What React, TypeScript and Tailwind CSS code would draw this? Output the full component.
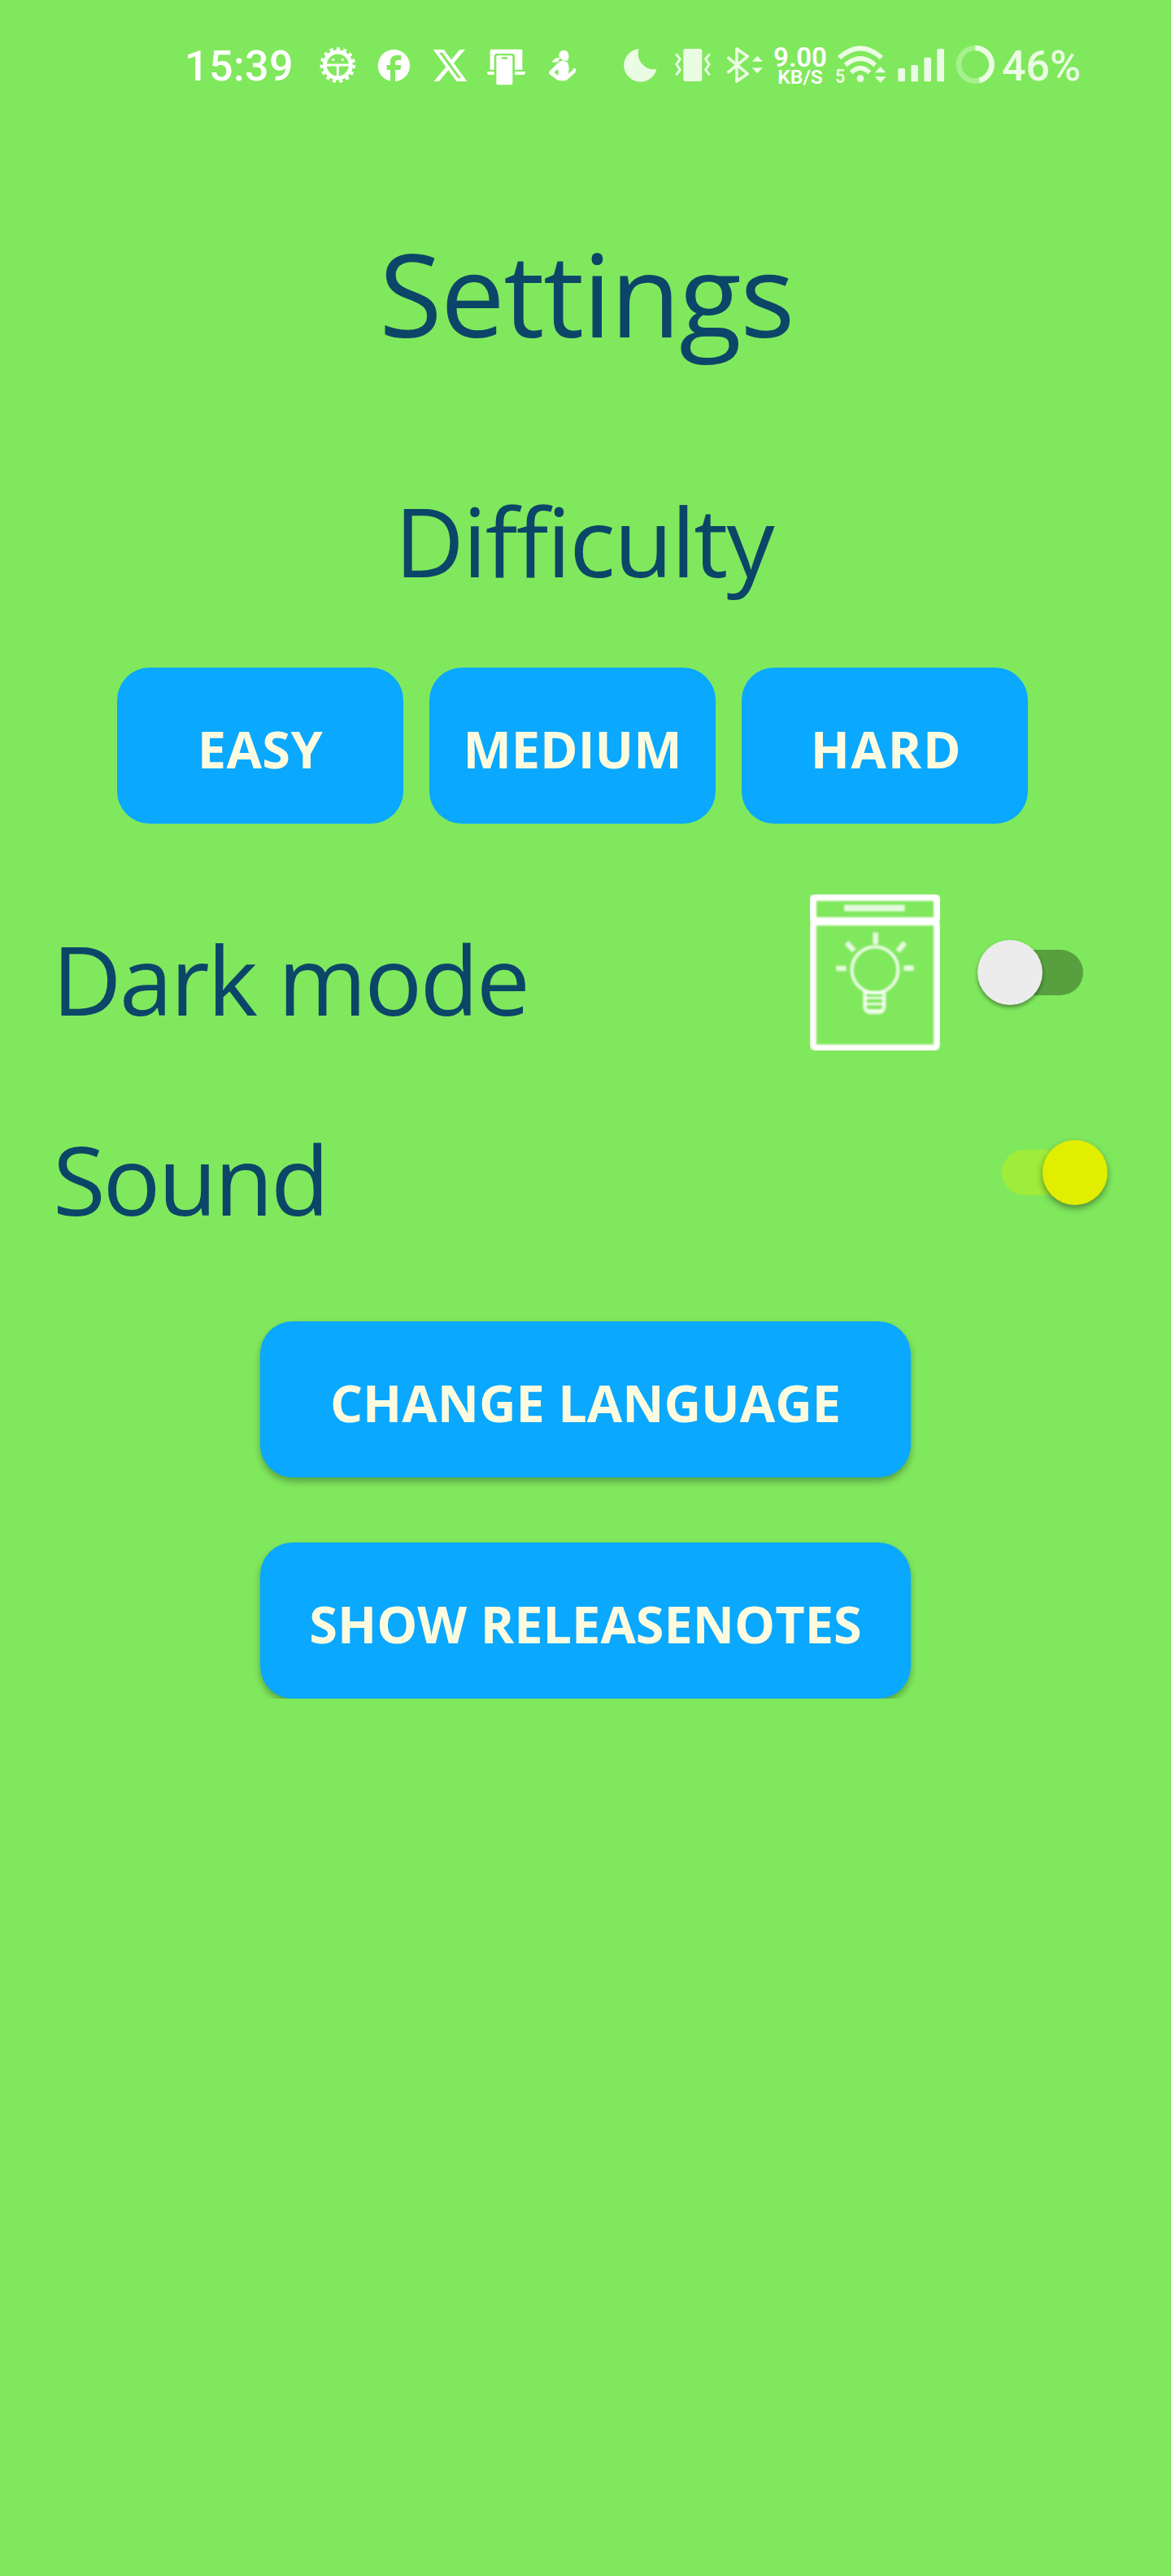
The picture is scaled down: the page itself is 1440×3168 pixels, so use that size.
const BG = "#80e85d";
const SOFT = "#eafce3";

function StatusBar() {
  return (
    <header className="flex h-[160px] items-start pt-10 pl-[210px] font-[Roboto] leading-none text-white">
      <div className="h-20 w-[180px] pt-4 pl-[17px] text-[52px] font-medium tracking-[0.4px] whitespace-nowrap">15:39</div>
      <svg className="h-20 w-[60px]" viewBox="540 0 180 240">
        <circle cx="616" cy="120" r="60" fill="none" stroke="#fff" strokeWidth="11" strokeDasharray="12.5 12.63" />
        <circle cx="616" cy="120" r="48" fill="none" stroke="#fff" strokeWidth="15" />
        <path d="M577 113A40 40 0 0 1 655 113Z" fill={BG} />
        <path d="M572 120H660M616 120V164" stroke="#fff" strokeWidth="9" />
        <circle cx="599" cy="100" r="5" fill="#fff" />
        <circle cx="634" cy="100" r="5" fill="#fff" />
      </svg>
      <svg className="h-20 w-[70px]" viewBox="0 0 210 240">
        <circle cx="103" cy="122" r="59" fill="#fff" />
        <path d="M90 183V138H77V120H90V108Q90 84 114 84H130V101H119Q108 101 108 111V120H130L127 138H108V183Z" fill={BG} />
      </svg>
      <svg className="h-20 w-[75px]" viewBox="210 0 225 240">
        <path
          transform="translate(240.8 49.5) scale(5.79 6)"
          fill="#fff"
          d="M18.244 2.25h3.308l-7.227 8.26 8.502 11.24H16.17l-5.214-6.817L4.99 21.75H1.68l7.73-8.835L1.254 2.25H8.08l4.713 6.231zm-1.161 17.52h1.833L7.084 4.126H5.117z"
        />
      </svg>
      <svg className="h-20 w-[70px]" viewBox="435 0 210 240">
        <path d="M462 62H573Q577 62 577 66V137H549V88Q549 78 539 78H483Q473 78 473 88V137H458V66Q458 62 462 62Z" fill="#fff" />
        <path d="M447 144H473V156H453Q447 154 447 144ZM549 144H588Q588 154 582 156H549Z" fill="#fff" />
        <rect x="481" y="85" width="60" height="108" rx="5" fill="#fff" />
        <rect x="499" y="91" width="24" height="7" rx="3.5" fill={BG} />
      </svg>
      <svg className="h-20 w-[75px]" viewBox="645 0 225 240">
        <circle cx="730" cy="83" r="18" fill="#fff" />
        <path d="M734 84L749 88L745 104H724Z" fill="#fff" />
        <path d="M714 93Q700 91 694 100Q690 106 684 107Q692 113 704 109Q714 105 714 93Z" fill="#fff" />
        <path
          fillRule="evenodd"
          fill="#fff"
          d="M712 108Q728 100 745 112Q752 130 746 152L764 138L763 134Q770 130 774 134L773 147L740 176Q722 180 706 175L677 154Q672 148 678 142ZM708 134L694 147L709 159Q712 148 708 134Z"
        />
      </svg>
      <svg className="h-20 w-20" viewBox="0 0 240 240">
        <path d="M137 60A61 61 0 1 0 202 135A58 58 0 0 1 137 60Z" fill={SOFT} />
      </svg>
      <svg className="h-20 w-[68px]" viewBox="240 0 204 240">
        <rect x="301" y="60" width="69" height="120" rx="8" fill={SOFT} />
        <path d="M274 79L289 98L276 117L289 138L274 157M398 79L383 98L396 117L383 138L398 157" fill="none" stroke={SOFT} strokeWidth="9" />
      </svg>
      <svg className="h-20 w-[60px]" viewBox="444 0 180 240">
        <path d="M464 91L538 152L498 180V60L538 88L464 149" fill="none" stroke={SOFT} strokeWidth="11" strokeLinejoin="round" />
        <path d="M554 107L574 86L594 107ZM554 130H594L574 151Z" fill={SOFT} />
      </svg>
      <div className="flex h-20 w-[76px] flex-col items-center pt-[17px] pr-[4px] font-semibold whitespace-nowrap">
        <span className="text-[33px] leading-[28px]">9.00</span>
        <span className="text-[24.5px] leading-[20px]">KB/S</span>
      </div>
      <svg className="h-20 w-[72px]" viewBox="42 0 216 240">
        <path d="M66 93Q144 23 222 93" fill="none" stroke={SOFT} strokeWidth="18" />
        <path d="M89 120Q144 72 199 120" fill="none" stroke={SOFT} strokeWidth="17" />
        <path d="M110 148Q144 115 178 148" fill="none" stroke={SOFT} strokeWidth="17" />
        <circle cx="144" cy="170" r="13" fill={SOFT} />
        <path d="M197 148L218 127L239 148ZM197 163H239L218 185Z" fill={SOFT} />
        <text x="51" y="186" fontSize="71" fontWeight="600" textLength="37" lengthAdjust="spacingAndGlyphs" fill={SOFT}>5</text>
      </svg>
      <svg className="h-20 w-[74px]" viewBox="258 0 222 240">
        <rect x="283" y="132" width="26" height="49" rx="5" fill={SOFT} />
        <rect x="331" y="120" width="26" height="61" rx="5" fill={SOFT} />
        <rect x="379" y="92" width="26" height="89" rx="5" fill={SOFT} />
        <rect x="427" y="60" width="26" height="121" rx="5" fill={SOFT} />
      </svg>
      <svg className="h-20 w-[59px]" viewBox="480 0 177 240">
        <circle cx="568" cy="118" r="61" fill="none" stroke="#a6f08d" strokeWidth="20" />
        <path d="M568 57A61 61 0 0 1 583 177" fill="none" stroke={SOFT} strokeWidth="20" />
      </svg>
      <div className="h-20 pt-4 pl-[3px] text-[52px] font-medium whitespace-nowrap text-[#eafce3]">46%</div>
    </header>
  );
}

function BulbIcon() {
  return (
    <svg className="h-48 w-40 overflow-hidden" viewBox="0 0 480 576">
      <defs>
        <filter id="soft" x="-10%" y="-10%" width="120%" height="120%">
          <feGaussianBlur stdDeviation="3" />
        </filter>
      </defs>
      <g fill="none" stroke="#fff" filter="url(#soft)">
        <rect x="10" y="10" width="460" height="88" rx="14" strokeWidth="28" />
        <rect x="11" y="102" width="458" height="464" rx="14" strokeWidth="25" />
        <g strokeOpacity="0.8">
          <path d="M126 50H350" strokeWidth="24" />
          <circle cx="240" cy="278" r="85" strokeWidth="13" />
          <path d="M242 140V184M135 178L163 208M350 178L324 210M97 273H134M346 272H383" strokeWidth="20" />
          <path d="M203 358V415Q205 434 222 434H254Q271 434 273 415V358" strokeWidth="15" />
          <path d="M202 362H274M202 382H274M202 404H274M210 428H266" strokeWidth="10" />
        </g>
      </g>
    </svg>
  );
}

function Switch({ on }: { on: boolean }) {
  return (
    <div
      role="switch"
      aria-checked={on}
      className={
        on
          ? "flex h-14 w-[100px] items-center justify-end rounded-full bg-[#9fec3a]"
          : "flex h-14 w-[100px] items-center rounded-full bg-[#58a03f]"
      }
    >
      <span
        className={
          on
            ? "-mr-[30px] size-20 shrink-0 rounded-full bg-[#e2ee00] shadow-[0_4px_8px_rgba(0,0,0,0.4)]"
            : "-ml-[30px] size-20 shrink-0 rounded-full bg-[#ececec] shadow-[0_3px_5px_rgba(0,0,0,0.4)]"
        }
      />
    </div>
  );
}

function Level({ label, className = "" }: { label: string; className?: string }) {
  return (
    <button
      className={`flex h-48 w-[352px] items-center justify-center rounded-[40px] bg-[#0aa8ff] pt-[7px] text-[63px] leading-none font-bold text-[#fdfbdf] ${className}`}
    >
      {label}
    </button>
  );
}

function Action({ label }: { label: string }) {
  return (
    <button className="flex h-48 w-[800px] items-center justify-center rounded-[40px] bg-[#0aa8ff] pt-[7px] text-[63px] leading-none font-bold whitespace-nowrap text-[#fdfbdf] shadow-[0_5px_9px_rgba(0,0,0,0.3)]">
      {label}
    </button>
  );
}

export default function App() {
  return (
    <main className="flex min-h-[3168px] w-[1440px] flex-col bg-[#80e85d] font-['Open_Sans',sans-serif] text-[#0b4668] [font-variant-ligatures:none]">
      <StatusBar />
      <h1 className="mt-[130px] pl-[2px] text-center text-[141px] leading-none tracking-[-1.65px]">Settings</h1>
      <h2 className="mt-[175px] pr-1 text-center text-[118px] leading-none tracking-[-1.9px]">Difficulty</h2>
      <div className="mt-[97px] flex gap-8 pl-36">
        <Level label="EASY" className="tracking-[0.4px]" />
        <Level label="MEDIUM" />
        <Level label="HARD" className="pl-1 tracking-[1.7px]" />
      </div>
      <div className="mt-[87px] flex h-48 items-center pr-[108px] pl-16">
        <span className="grow pt-[15px] text-[118px] leading-none tracking-[-2.84px]">Dark mode</span>
        <BulbIcon />
        <div className="ml-[76px]">
          <Switch on={false} />
        </div>
      </div>
      <div className="mt-[54px] flex h-48 items-center justify-between pr-[108px] pl-[65px]">
        <span className="pt-[15px] text-[118px] leading-none tracking-[-3.1px]">Sound</span>
        <Switch on />
      </div>
      <div className="mt-[67px] flex flex-col items-center gap-20 overflow-hidden pt-5">
        <Action label="CHANGE LANGUAGE" />
        <Action label="SHOW RELEASENOTES" />
      </div>
    </main>
  );
}
